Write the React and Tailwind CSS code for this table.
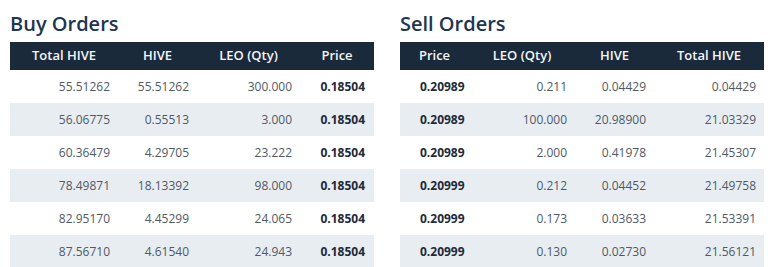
import React from "react";

const buyOrders = [
  { total: "55.51262", hive: "55.51262", leo: "300.000", price: "0.18504" },
  { total: "56.06775", hive: "0.55513", leo: "3.000", price: "0.18504" },
  { total: "60.36479", hive: "4.29705", leo: "23.222", price: "0.18504" },
  { total: "78.49871", hive: "18.13392", leo: "98.000", price: "0.18504" },
  { total: "82.95170", hive: "4.45299", leo: "24.065", price: "0.18504" },
  { total: "87.56710", hive: "4.61540", leo: "24.943", price: "0.18504" },
];

const sellOrders = [
  { price: "0.20989", leo: "0.211", hive: "0.04429", total: "0.04429" },
  { price: "0.20989", leo: "100.000", hive: "20.98900", total: "21.03329" },
  { price: "0.20989", leo: "2.000", hive: "0.41978", total: "21.45307" },
  { price: "0.20999", leo: "0.212", hive: "0.04452", total: "21.49758" },
  { price: "0.20999", leo: "0.173", hive: "0.03633", total: "21.53391" },
  { price: "0.20999", leo: "0.130", hive: "0.02730", total: "21.56121" },
];

const Th = ({ children }) => (
  <th className="h-[28px] p-0 text-center text-[13px] font-semibold text-[#f4f6f8]">{children}</th>
);

const BuyTable = () => (
  <div className="w-[364px]">
    <h2 className="mb-[6px] text-[20px] leading-[24px] font-semibold text-[#1d3550]">Buy Orders</h2>
    <table className="w-full table-fixed border-collapse">
      <colgroup>
        <col className="w-[108px]" />
        <col className="w-[79px]" />
        <col className="w-[103px]" />
        <col className="w-[74px]" />
      </colgroup>
      <thead>
        <tr className="bg-[#1b2a3a]">
          <Th>Total HIVE</Th>
          <Th>HIVE</Th>
          <Th>LEO (Qty)</Th>
          <Th>Price</Th>
        </tr>
      </thead>
      <tbody>
        {buyOrders.map((o, i) => (
          <tr key={i} className={i % 2 === 1 ? "h-[33px] bg-[#e8edf2]" : "h-[33px] bg-white"}>
            <td className="p-0 pr-2 text-right text-[12px] text-[#4f5965]">{o.total}</td>
            <td className="p-0 pr-2 text-right text-[12px] text-[#4f5965]">{o.hive}</td>
            <td className="p-0 pr-2 text-right text-[12px] text-[#4f5965]">{o.leo}</td>
            <td className="p-0 pr-[9px] text-right text-[12px] font-bold text-[#1e2a37]">{o.price}</td>
          </tr>
        ))}
      </tbody>
    </table>
  </div>
);

const SellTable = () => (
  <div className="w-[364px]">
    <h2 className="mb-[6px] text-[20px] leading-[24px] font-semibold text-[#1d3550]">Sell Orders</h2>
    <table className="w-full table-fixed border-collapse">
      <colgroup>
        <col className="w-[69px]" />
        <col className="w-[106px]" />
        <col className="w-[79px]" />
        <col className="w-[110px]" />
      </colgroup>
      <thead>
        <tr className="bg-[#1b2a3a]">
          <Th>Price</Th>
          <Th>LEO (Qty)</Th>
          <Th>HIVE</Th>
          <Th>Total HIVE</Th>
        </tr>
      </thead>
      <tbody>
        {sellOrders.map((o, i) => (
          <tr key={i} className={i % 2 === 1 ? "h-[33px] bg-[#e8edf2]" : "h-[33px] bg-white"}>
            <td className="p-0 pl-5 text-left text-[12px] font-bold text-[#1e2a37]">{o.price}</td>
            <td className="p-0 pr-2 text-right text-[12px] text-[#4f5965]">{o.leo}</td>
            <td className="p-0 pr-2 text-right text-[12px] text-[#4f5965]">{o.hive}</td>
            <td className="p-0 pr-2 text-right text-[12px] text-[#4f5965]">{o.total}</td>
          </tr>
        ))}
      </tbody>
    </table>
  </div>
);

export default function App() {
  return (
    <div className="flex gap-[26px] bg-white pl-[10px] pt-[12px] font-['Open_Sans',sans-serif]">
      <BuyTable />
      <SellTable />
    </div>
  );
}
